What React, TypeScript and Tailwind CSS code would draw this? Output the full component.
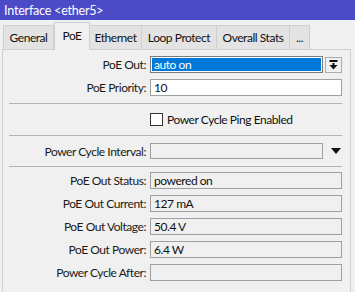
import React from 'react';

const tabs = [
  { name: 'General', w: 'w-[51px]' },
  { name: 'PoE', w: 'w-[36px]', active: true },
  { name: 'Ethernet', w: 'w-[53px]' },
  { name: 'Loop Protect', w: 'w-[76px]' },
  { name: 'Overall Stats', w: 'w-[74px]' },
  { name: '...', w: 'w-[21px]' },
];

const readOnly = [
  { label: 'PoE Out Status:', value: 'powered on' },
  { label: 'PoE Out Current:', value: '127 mA' },
  { label: 'PoE Out Voltage:', value: '50.4 V' },
  { label: 'PoE Out Power:', value: '6.4 W' },
  { label: 'Power Cycle After:', value: '' },
];

const Label: React.FC<{ text: string }> = ({ text }) => (
  <div className="w-[147px] shrink-0 pr-[4px] text-right text-[#1a1a1a]">{text}</div>
);

const Separator: React.FC<{ className?: string }> = ({ className }) => (
  <div className={`ml-[6px] mr-[8px] h-px bg-[#b4b4b4] ${className ?? ''}`} />
);

export default function App() {
  return (
    <div
      className="w-[355px] h-[292px] overflow-hidden bg-[#f0f0f0] text-[12px] leading-[15px] tracking-[-0.45px] text-[#111]"
      style={{ fontFamily: 'Lato, "Liberation Sans", Arial, sans-serif' }}
    >
      {/* title bar */}
      <div className="h-[20px] bg-[#4b4bc8] text-white text-[12.5px] tracking-[-0.2px] flex items-center pl-[4px]">
        Interface &lt;ether5&gt;
      </div>

      {/* tabs */}
      <div className="h-[29px] flex items-end pl-[3px]">
        {tabs.map((t) =>
          t.active ? (
            <div
              key={t.name}
              className={`${t.w} h-[28px] -mb-px relative z-10 bg-[#f0f0f0] border border-b-0 border-[#d0d0d0] flex items-center justify-center pb-[3px]`}
            >
              {t.name}
            </div>
          ) : (
            <div
              key={t.name}
              className={`${t.w} h-[24px] bg-[#e3e3e3] border border-b-0 border-[#d0d0d0] -ml-px first:ml-0 flex items-center justify-center`}
            >
              {t.name}
            </div>
          )
        )}
      </div>

      {/* panel */}
      <div className="ml-[2px] mr-[4px] h-[300px] border border-[#d0d0d0] border-b-0">
        {/* PoE Out */}
        <div className="mt-[6px] h-[17px] flex items-center">
          <Label text="PoE Out:" />
          <div className="w-[173px] h-[17px] border border-[#7a7a7a] bg-white p-px">
            <div className="h-full bg-[#0078d7] text-white pl-[2px] flex items-center">auto on</div>
          </div>
          <div className="ml-[2px] w-[17px] h-[16px] border border-[#adadad] bg-[#f0f0f0] flex items-center justify-center">
            <svg width="9" height="10" viewBox="0 0 9 10">
              <rect x="0.5" y="0" width="8" height="2" fill="#111" />
              <rect x="3.5" y="3" width="2" height="2" fill="#111" />
              <polygon points="0.5,5 8.5,5 4.5,9.5" fill="#111" />
            </svg>
          </div>
        </div>

        {/* PoE Priority */}
        <div className="mt-[6px] h-[17px] flex items-center">
          <Label text="PoE Priority:" />
          <div className="w-[192px] h-[17px] border border-[#a0a0a0] bg-white pl-[3px] flex items-center">10</div>
        </div>

        <Separator className="mt-[7px]" />

        {/* checkbox */}
        <div className="mt-[9px] h-[13px] flex items-center pl-[147px]">
          <div className="w-[13px] h-[13px] border border-[#333] bg-white" />
          <span className="ml-[4px]">Power Cycle Ping Enabled</span>
        </div>

        <Separator className="mt-[9px]" />

        {/* Power Cycle Interval */}
        <div className="mt-[7px] h-[16px] flex items-center">
          <Label text="Power Cycle Interval:" />
          <div className="w-[173px] h-[16px] border border-[#a0a0a0] bg-[#f0f0f0]" />
          <svg className="ml-[8px]" width="10" height="6" viewBox="0 0 10 6">
            <polygon points="0,0 10,0 5,6" fill="#111" />
          </svg>
        </div>

        <Separator className="mt-[7px]" />

        {/* read-only status rows */}
        <div className="mt-[5px] flex flex-col gap-[6px]">
          {readOnly.map((r) => (
            <div key={r.label} className="h-[17px] flex items-center">
              <Label text={r.label} />
              <div className="w-[192px] h-[17px] border border-[#a0a0a0] bg-[#f0f0f0] pl-[3px] flex items-center">
                {r.value}
              </div>
            </div>
          ))}
        </div>
      </div>
    </div>
  );
}
